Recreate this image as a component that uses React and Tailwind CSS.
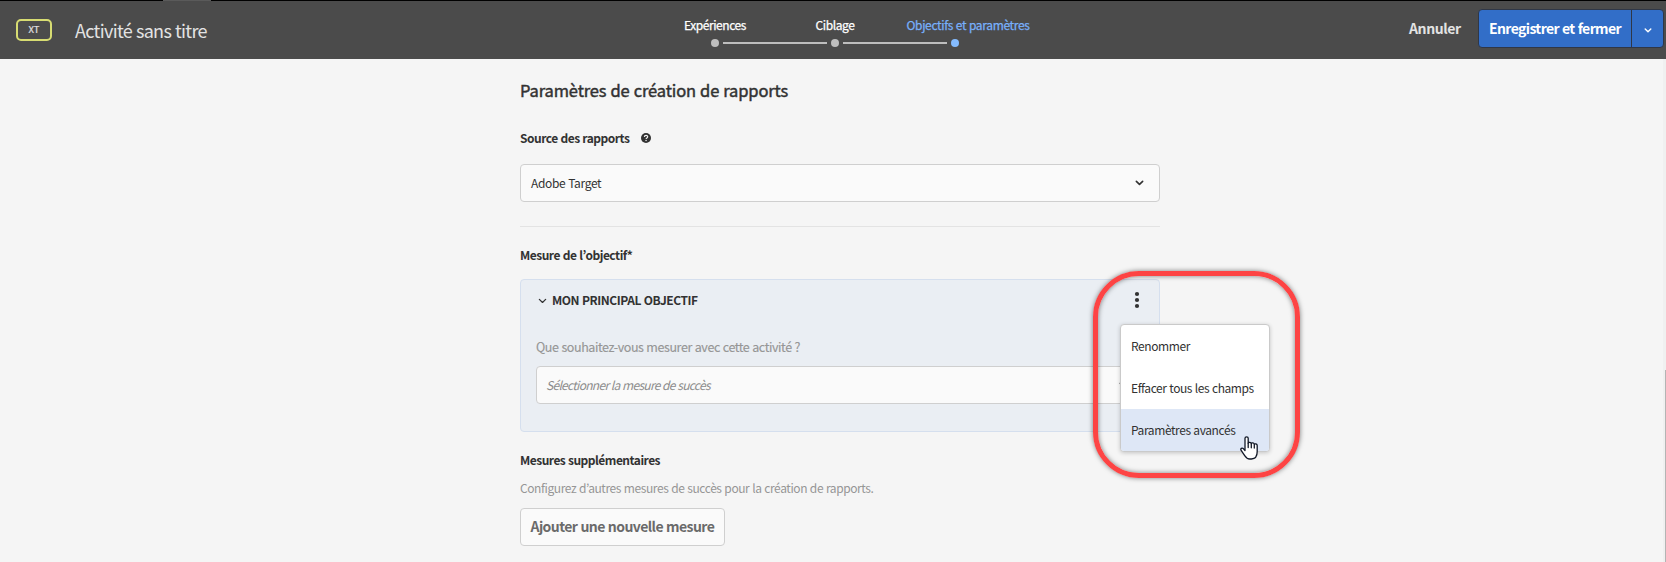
function Chevron({ className = "", w = 1.8 }) {
  return (
    <svg className={className} viewBox="0 0 10 6" fill="none" stroke="currentColor" strokeWidth={w} strokeLinecap="round" strokeLinejoin="round">
      <path d="M1.5 1.2 5 4.6 8.5 1.2" />
    </svg>
  );
}

function Step({ label, active, className }) {
  return (
    <div className="flex w-[8px] flex-col items-center gap-[5px]">
      <span className={`text-[12px] leading-[18px] whitespace-nowrap [-webkit-text-stroke:0.25px] ${active ? "text-[#78b0fb]" : "text-white"} ${className}`}>{label}</span>
      <span className={`size-[8px] shrink-0 rounded-full ${active ? "bg-[#85bcff]" : "bg-[#bebebe]"}`} />
    </div>
  );
}

function Line() {
  return <span className="mx-[4px] mb-[3px] h-[2px] w-[104px] bg-[#bebebe]" />;
}

function HandCursor({ className }) {
  return (
    <svg className={className} viewBox="0 0 18 24" fill="#fff" stroke="#111827" strokeWidth="1.3" strokeLinejoin="round" strokeLinecap="round">
      <path d="M5 14.6V2.2C5 .3 8.2.3 8.2 2.2V7.2C8.4 5.9 11.2 6 11.3 7.6 11.7 6.5 14.2 6.7 14.3 8.3 14.9 7.4 17.2 7.7 17.2 9.6V15.6C17.2 19.6 15.4 23 11.4 23H9.8C7.2 23 5.9 21.5 4.7 19.6L1 14.2C.2 12.6 2 11.4 3.3 12.6Z" />
      <path d="M8.2 7.2V11.6M11.3 7.8V11.8M14.3 8.6V12" fill="none" />
    </svg>
  );
}

export default function App() {
  return (
    <div className="relative flex h-[562px] w-[1666px] flex-col overflow-hidden bg-[#f5f5f5] font-['Noto_Sans_CJK_JP','Noto_Sans',sans-serif] text-[12px] leading-[20px] text-[#323232] [word-spacing:0.5px]">
      <header className="flex h-[59px] shrink-0 items-start border-t border-black bg-[#4b4b4b]">
        <div className="mt-[18px] ml-[16px] flex h-[22px] w-[36px] items-center justify-center rounded-[5px] border-2 border-[#d7dc72]">
          <span className="text-[9.5px] leading-none text-[#e0e0e0] [-webkit-text-stroke:0.2px]">XT</span>
        </div>
        <h1 className="mt-[16px] ml-[23px] w-[636px] text-[18px] leading-[26px] tracking-[-0.68px] whitespace-nowrap text-[#e3e3e3]">Activité sans titre</h1>
        <div className="mt-[15px] flex items-end">
          <Step label="Expériences" className="tracking-[-0.45px]" />
          <Line />
          <Step label="Ciblage" className="tracking-[-0.4px]" />
          <Line />
          <Step label="Objectifs et paramètres" active className="ml-[26px] tracking-[-0.35px]" />
        </div>
        <div className="mt-[8px] ml-[450px] flex h-[39px] items-center">
          <span className="mb-[1px] w-[69px] text-[14px] leading-[22px] font-bold tracking-[-0.4px] text-[#e3e3e3]">Annuler</span>
          <div className="flex h-[39px] w-[186px] rounded-[4px] border border-[#2f3747] bg-[#326ec8] text-white">
            <div className="flex w-[153px] items-center border-r border-[#2f3747] pb-[1px] pl-[10px]">
              <span className="text-[14px] leading-[22px] font-bold tracking-[-0.62px] whitespace-nowrap">Enregistrer et fermer</span>
            </div>
            <div className="flex flex-1 items-center justify-center pt-[3px]">
              <Chevron className="h-[5px] w-[8px]" />
            </div>
          </div>
        </div>
      </header>

      <main className="ml-[520px] flex w-[640px] flex-col items-start">
        <h2 className="mt-[18px] text-[16.5px] leading-[26px] tracking-[-0.13px] whitespace-nowrap [-webkit-text-stroke:0.45px]">Paramètres de création de rapports</h2>
        <div className="mt-[25px] flex h-[20px] items-center">
          <span className="w-[121px] font-bold tracking-[-0.49px] whitespace-nowrap">Source des rapports</span>
          <svg className="size-[10px]" viewBox="0 0 10 10">
            <circle cx="5" cy="5" r="5" fill="#323232" />
            <path d="M3.4 3.9C3.4 1.9 6.7 1.9 6.7 3.8 6.7 4.9 5.1 4.9 5.1 6" fill="none" stroke="#f5f5f5" strokeWidth="1.2" />
            <rect x="4.4" y="6.9" width="1.3" height="1.2" fill="#f5f5f5" />
          </svg>
        </div>
        <div className="mt-[16px] flex h-[38px] w-full items-center justify-between rounded-[4px] border border-[#cfcfcf] bg-[#fafafa] pr-[15px] pl-[10px]">
          <span className="tracking-[-0.34px]">Adobe Target</span>
          <Chevron className="h-[6px] w-[9px]" />
        </div>
        <div className="mt-[24px] h-px w-full bg-[#e3e3e3]" />
        <span className="mt-[18px] font-bold tracking-[-0.48px]">Mesure de l’objectif*</span>
        <section className="relative mt-[14px] flex h-[153px] w-full flex-col rounded-[4px] border border-[#d5dfee] bg-[#eaeef3]">
          <div className="mt-[9px] flex h-[22px] items-center">
            <Chevron className="mt-[2px] ml-[17px] h-[6px] w-[9px]" w={1.4} />
            <span className="ml-[5px] font-bold tracking-[-0.44px] whitespace-nowrap">MON PRINCIPAL OBJECTIF</span>
            <svg className="mr-[19px] mb-[1px] ml-auto h-[18px] w-[6px]" viewBox="0 0 6 18" fill="#323232">
              <circle cx="3" cy="3" r="2.1" />
              <circle cx="3" cy="9" r="2.1" />
              <circle cx="3" cy="15" r="2.1" />
            </svg>
          </div>
          <p className="mt-[26px] ml-[15px] text-[12.5px] tracking-[-0.42px] text-[#969696] [-webkit-text-stroke:0.15px]">Que souhaitez-vous mesurer avec cette activité ?</p>
          <div className="mt-[9px] mr-[15px] ml-[15px] flex h-[38px] items-center justify-between rounded-[4px] border border-[#cfcfcf] bg-[#fafafa] pr-[15px] pl-[9px]">
            <span className="tracking-[-0.71px] text-[#8c8c8c] italic">Sélectionner la mesure de succès</span>
            <Chevron className="h-[6px] w-[9px]" />
          </div>

          <ul className="absolute top-[44px] left-[599px] z-10 w-[150px] overflow-hidden rounded-[4px] border border-[#cacaca] bg-white whitespace-nowrap shadow-[0_1px_4px_rgba(0,0,0,0.2)]">
            <li className="flex h-[42px] items-center pl-[10px] tracking-[-0.41px]">Renommer</li>
            <li className="flex h-[42px] items-center pl-[10px] tracking-[-0.43px]">Effacer tous les champs</li>
            <li className="flex h-[42px] items-center bg-[#dee7f6] pl-[10px] tracking-[-0.42px]">Paramètres avancés</li>
          </ul>
        </section>
        <span className="mt-[18px] font-bold tracking-[-0.5px]">Mesures supplémentaires</span>
        <span className="mt-[8px] tracking-[-0.41px] text-[#969696]">Configurez d’autres mesures de succès pour la création de rapports.</span>
        <div className="mt-[10px] flex h-[38px] w-[205px] shrink-0 items-center rounded-[4px] border border-[#cfcfcf] bg-[#fafafa] pb-[2px] pl-[9.5px]">
          <span className="text-[14px] leading-[22px] font-bold tracking-[-0.57px] whitespace-nowrap text-[#6a6a6a]">Ajouter une nouvelle mesure</span>
        </div>
      </main>

      <div className="absolute top-[271px] left-[1093px] z-20 h-[207px] w-[207px] rounded-[46px] border-[5px] border-[#fd4444] shadow-[0_0_5px_rgba(0,0,0,0.5),inset_0_0_5px_rgba(0,0,0,0.5)]" />
      <HandCursor className="absolute top-[436px] left-[1240px] z-30 h-[24px] w-[18px]" />
      <div className="absolute top-0 left-[163px] h-px w-[48px] bg-[#5a5a5a]" />
      <div className="absolute top-[59px] right-0 flex h-[503px] w-[3px] items-end justify-end bg-[#f0f0f0]">
        <div className="h-[192px] w-px bg-[#b4b4b4]" />
      </div>
    </div>
  );
}
